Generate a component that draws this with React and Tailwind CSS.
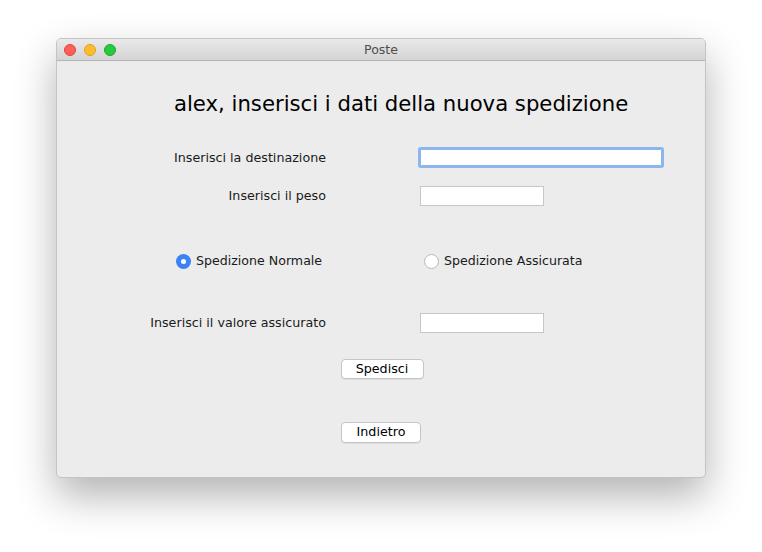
import React, { useState } from 'react';

const font = { fontFamily: '"DejaVu Sans", "Noto Sans", sans-serif' };

function Radio({ checked, label, onClick }) {
    return (
        <button type="button" onClick={onClick} className="flex items-center gap-[5px] text-[12.6px] text-[#1a1a1a]">
            {checked ? (
                <span className="w-[15px] h-[15px] rounded-full bg-[#3a82f7] flex items-center justify-center">
                    <span className="w-[5px] h-[5px] rounded-full bg-white" />
                </span>
            ) : (
                <span className="w-[15px] h-[15px] rounded-full bg-white border border-[#b8b8b8]" />
            )}
            <span>{label}</span>
        </button>
    );
}

export default function App() {
    const [tipo, setTipo] = useState('normale');

    return (
        <div className="min-h-[552px] w-[762px] bg-white pt-[38px] pl-[56px]" style={font}>
            {/* Window */}
            <div className="w-[650px] h-[440px] rounded-[5px] overflow-hidden border border-[#c4c4c4] bg-[#ececec] shadow-[0_18px_40px_rgba(0,0,0,0.3)] flex flex-col">
                {/* Title bar */}
                <div className="h-[22px] shrink-0 bg-gradient-to-b from-[#e9e9e9] to-[#d4d4d4] border-b border-[#b4b4b4] flex items-center relative">
                    <div className="flex items-center gap-[8px] pl-[7px]">
                        <span className="w-[12px] h-[12px] rounded-full bg-[#fc5f57] border border-[#e0443e]" />
                        <span className="w-[12px] h-[12px] rounded-full bg-[#fdbc2e] border border-[#dea123]" />
                        <span className="w-[12px] h-[12px] rounded-full bg-[#28c840] border border-[#1aab29]" />
                    </div>
                    <div className="absolute inset-0 pt-[1px] flex items-center justify-center text-[12.5px] text-[#4d4d4d]">Poste</div>
                </div>

                {/* Content */}
                <div className="flex flex-col">
                    <h1 className="mt-[31px] h-[24px] pl-[117px] text-[21.2px] leading-[24px] text-black">
                        alex, inserisci i dati della nuova spedizione
                    </h1>

                    <div className="mt-[32px] h-[19px] grid grid-cols-[269px_auto] gap-x-[94px] items-center">
                        <label className="text-right text-[12.7px] text-[#1a1a1a]">Inserisci la destinazione</label>
                        <input className="w-[242px] h-[17px] bg-white border border-[#8fb6ea] outline-none shadow-[0_0_0_2px_#8ab7f2] rounded-[1px]" />
                    </div>

                    <div className="mt-[19px] h-[20px] grid grid-cols-[269px_auto] gap-x-[94px] items-center">
                        <label className="text-right text-[12.7px] text-[#1a1a1a]">Inserisci il peso</label>
                        <input className="w-[124px] h-[20px] bg-white border border-[#c6c6c6] outline-none" />
                    </div>

                    <div className="mt-[47px] h-[16px] flex items-center">
                        <div className="pl-[119px] w-[367px]">
                            <Radio checked={tipo === 'normale'} label="Spedizione Normale" onClick={() => setTipo('normale')} />
                        </div>
                        <Radio checked={tipo === 'assicurata'} label="Spedizione Assicurata" onClick={() => setTipo('assicurata')} />
                    </div>

                    <div className="mt-[44px] h-[20px] grid grid-cols-[269px_auto] gap-x-[94px] items-center">
                        <label className="text-right text-[12.7px] text-[#1a1a1a]">Inserisci il valore assicurato</label>
                        <input className="w-[124px] h-[20px] bg-white border border-[#c6c6c6] outline-none" />
                    </div>

                    <div className="mt-[26px] flex justify-center pl-[2px]">
                        <button className="w-[83px] h-[20px] bg-white border border-[#c5c5c5] rounded-[4px] shadow-[0_1px_0_rgba(0,0,0,0.06)] text-[12.7px] leading-none text-black">
                            Spedisci
                        </button>
                    </div>

                    <div className="mt-[43px] flex justify-center">
                        <button className="w-[80px] h-[21px] bg-white border border-[#c5c5c5] rounded-[4px] shadow-[0_1px_0_rgba(0,0,0,0.06)] text-[12.7px] leading-none text-black">
                            Indietro
                        </button>
                    </div>
                </div>
            </div>
        </div>
    );
}
